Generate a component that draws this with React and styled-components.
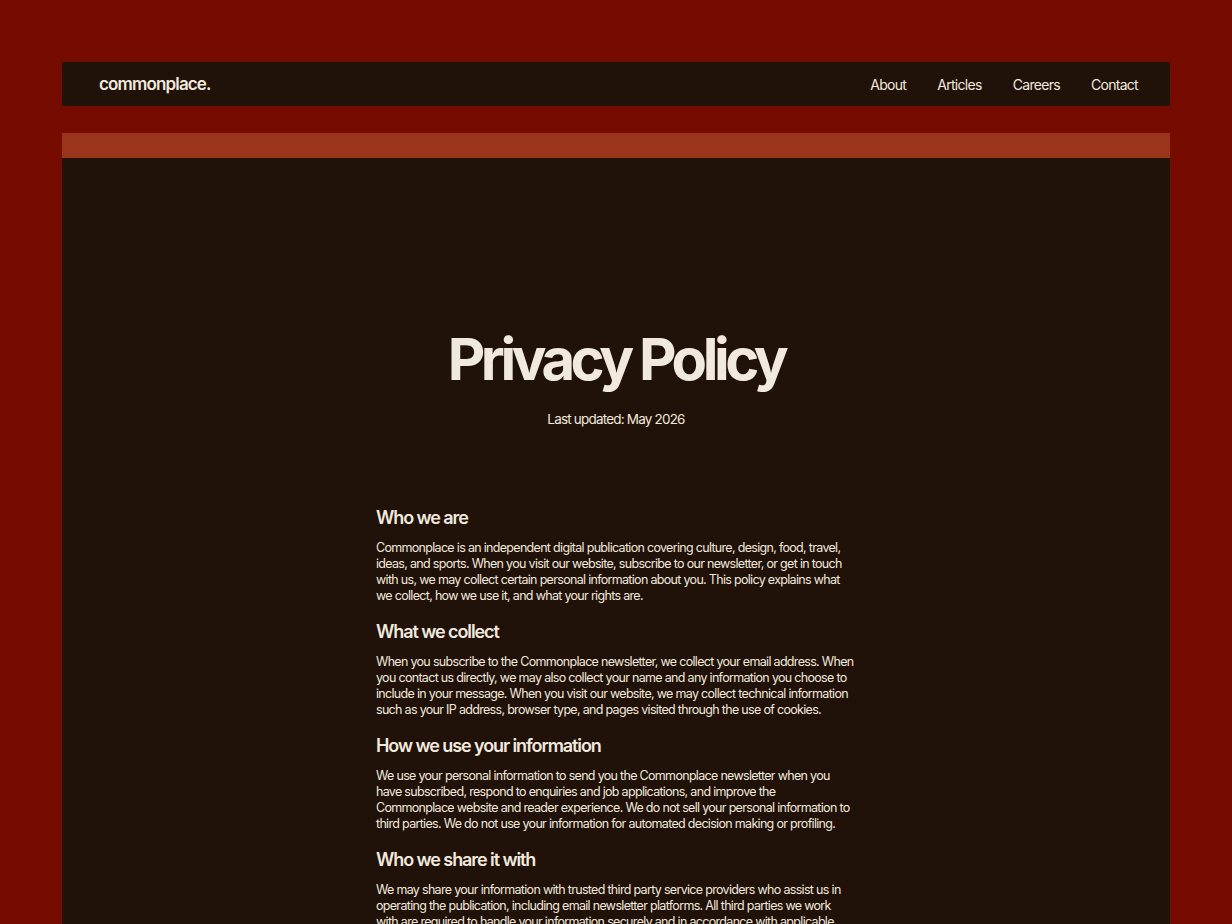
import React from 'react'
import styled, { createGlobalStyle } from 'styled-components'

const GlobalStyle = createGlobalStyle`
  html, body {
    margin: 0;
    padding: 0;
    background: #760c00;
  }
  body {
    font-family: Inter, "Noto Sans", sans-serif;
    color: #f1e9de;
  }
`

const Page = styled.div`
  padding: 62px 62px 0;
  min-height: 100vh;
  box-sizing: border-box;
`

const Header = styled.header`
  height: 44px;
  background: #201109;
  display: flex;
  align-items: center;
  justify-content: space-between;
  padding: 0 32px 0 37px;
  border-radius: 1px;
`

const Logo = styled.a`
  font-size: 17px;
  font-weight: 600;
  letter-spacing: -0.05em;
  color: #f1e9de;
  text-decoration: none;
`

const Nav = styled.nav`
  display: flex;
  gap: 31px;
`

const NavLink = styled.a`
  font-size: 14px;
  letter-spacing: -0.05em;
  color: #f1e9de;
  text-decoration: none;
`

const Stripe = styled.div`
  margin-top: 27px;
  height: 25px;
  background: #9a341b;
`

const Main = styled.main`
  background: #201109;
  padding: 172px 0 80px;
`

const Hero = styled.div`
  text-align: center;
`

const Title = styled.h1`
  margin: 0;
  font-size: 58px;
  font-weight: 700;
  letter-spacing: -0.077em;
  line-height: 1;
  color: #f1e9de;
`

const Updated = styled.p`
  margin: 23px 0 0;
  font-size: 13.5px;
  letter-spacing: -0.06em;
`

const Body = styled.div`
  width: 478px;
  margin: 79px auto 0;
  padding-right: 2px;
`

const Section = styled.section`
  & + & {
    margin-top: 16px;
  }
`

const Heading = styled.h2`
  margin: 0 0 10px;
  font-size: 18px;
  font-weight: 600;
  letter-spacing: -0.06em;
  line-height: 24px;
`

const Text = styled.p`
  margin: 0;
  font-size: 12.5px;
  line-height: 16px;
  letter-spacing: -0.055em;
`

const links = ['About', 'Articles', 'Careers', 'Contact']

const sections = [
  {
    title: 'Who we are',
    text: 'Commonplace is an independent digital publication covering culture, design, food, travel, ideas, and sports. When you visit our website, subscribe to our newsletter, or get in touch with us, we may collect certain personal information about you. This policy explains what we collect, how we use it, and what your rights are.',
  },
  {
    title: 'What we collect',
    text: 'When you subscribe to the Commonplace newsletter, we collect your email address. When you contact us directly, we may also collect your name and any information you choose to include in your message. When you visit our website, we may collect technical information such as your IP address, browser type, and pages visited through the use of cookies.',
  },
  {
    title: 'How we use your information',
    text: 'We use your personal information to send you the Commonplace newsletter when you have subscribed, respond to enquiries and job applications, and improve the Commonplace website and reader experience. We do not sell your personal information to third parties. We do not use your information for automated decision making or profiling.',
  },
  {
    title: 'Who we share it with',
    text: 'We may share your information with trusted third party service providers who assist us in operating the publication, including email newsletter platforms. All third parties we work with are required to handle your information securely and in accordance with applicable data protection law.',
  },
]

export default function App() {
  return (
    <>
      <GlobalStyle />
      <Page>
        <Header>
          <Logo href="#">commonplace.</Logo>
          <Nav>
            {links.map((l) => (
              <NavLink key={l} href="#">
                {l}
              </NavLink>
            ))}
          </Nav>
        </Header>
        <Stripe />
        <Main>
          <Hero>
            <Title>Privacy Policy</Title>
            <Updated>Last updated: May 2026</Updated>
          </Hero>
          <Body>
            {sections.map((s) => (
              <Section key={s.title}>
                <Heading>{s.title}</Heading>
                <Text>{s.text}</Text>
              </Section>
            ))}
          </Body>
        </Main>
      </Page>
    </>
  )
}
